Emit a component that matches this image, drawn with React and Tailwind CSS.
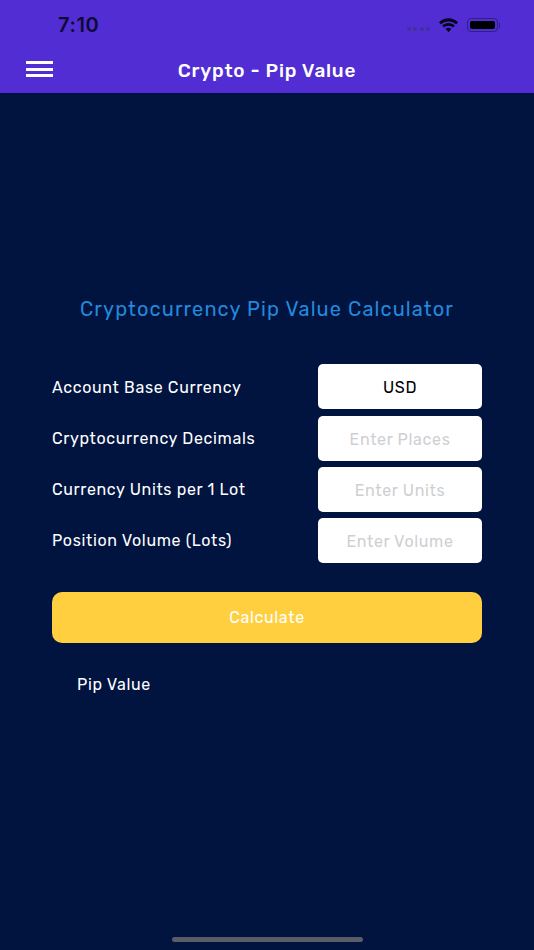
import { useState } from 'react';

const fields = [
  { label: 'Account Base Currency', value: 'USD' },
  { label: 'Cryptocurrency Decimals', placeholder: 'Enter Places' },
  { label: 'Currency Units per 1 Lot', placeholder: 'Enter Units' },
  { label: 'Position Volume (Lots)', placeholder: 'Enter Volume' },
];

const font = { fontFamily: 'Rubik, "Noto Sans", Inter, sans-serif' };

function StatusIcons() {
  return (
    <div className="flex items-center">
      <div className="mt-[8px] mr-[8px] flex gap-[2.5px]">
        {[0, 1, 2, 3].map((i) => (
          <span key={i} className="h-[4px] w-[4px] rounded-full bg-[#43309c]" />
        ))}
      </div>
      <svg width="21" height="15" viewBox="0 0 21 15" className="mr-[8px]">
        <path fill="#05051f" d="M10.5 3.400c3 0 5.600 1.100 7.600 3l1.900-2.100C17.400 1.700 14 .3 10.500.3S3.600 1.700 1 4.300l1.900 2.100c2-1.900 4.600-3 7.600-3z" />
        <path fill="#05051f" d="M10.500 7.800c1.800 0 3.400.7 4.600 1.800l1.700-2c-1.600-1.500-3.900-2.500-6.300-2.500s-4.700 1-6.300 2.500l1.700 2c1.200-1.100 2.800-1.800 4.600-1.800z" />
        <path fill="#05051f" d="M10.500 9.700c-1.100 0-2.100.4-2.900 1.100l2.900 3.400 2.900-3.400c-.8-.7-1.800-1.100-2.900-1.100z" />
      </svg>
      <div className="flex items-center">
        <div className="flex h-[14px] w-[31px] items-center rounded-[4px] border border-[#2f2085] p-[2px]">
          <div className="h-full w-full rounded-[2px] bg-black" />
        </div>
        <span className="ml-[1px] h-[5px] w-[1px] bg-[#2f2085]" />
      </div>
    </div>
  );
}

export default function App() {
  const [vals, setVals] = useState({});

  return (
    <div className="flex h-[950px] w-[534px] flex-col bg-[#00143f] text-white" style={font}>
      <header className="h-[93px] bg-[#512dd3]">
        <div className="flex h-[50px] items-center justify-between pl-[58px] pr-[34px]">
          <span className="text-[20px] font-semibold tracking-[0.6px] text-[#0d0a33]" style={{ fontFamily: 'Inter, sans-serif' }}>7:10</span>
          <StatusIcons />
        </div>
        <div className="relative flex h-[43px] items-center justify-center">
          <div className="absolute left-[26px] top-[11px] flex flex-col gap-[3.5px]">
            <span className="h-[3px] w-[27px] bg-white" />
            <span className="h-[3px] w-[27px] bg-white" />
            <span className="h-[3px] w-[27px] bg-white" />
          </div>
          <h1 className="text-[19px] font-medium tracking-[0.8px]">Crypto - Pip Value</h1>
        </div>
      </header>

      <main className="flex flex-1 flex-col px-[52px] pt-[203px]">
        <h2 className="text-center text-[20px] leading-[26px] tracking-[1.1px] text-[#2389dc]">
          Cryptocurrency Pip Value Calculator
        </h2>

        <div className="mt-[42.4px] flex flex-col gap-[6.2px]">
          {fields.map((f) => (
            <div key={f.label} className="flex items-center justify-between">
              <span className="pt-[2px] text-[16px] tracking-[0.65px]">{f.label}</span>
              {f.value ? (
                <div className="flex h-[45px] w-[164px] items-center justify-center rounded-[5px] bg-white pt-[2px] text-[16px] tracking-[0.65px] text-black">
                  {f.value}
                </div>
              ) : (
                <input
                  className="h-[45px] w-[164px] rounded-[5px] bg-white pt-[2px] text-center text-[16px] tracking-[0.65px] text-black outline-none placeholder:text-[#cfcfd2]"
                  placeholder={f.placeholder}
                  value={vals[f.label] || ''}
                  onChange={(e) => setVals({ ...vals, [f.label]: e.target.value })}
                />
              )}
            </div>
          ))}
        </div>

        <button className="mt-[29px] h-[51px] w-full rounded-[10px] bg-[#ffcf40] pt-[2px] text-[16px] tracking-[0.65px] text-white">
          Calculate
        </button>

        <p className="mt-[32px] pl-[25px] text-[16px] leading-[20px] tracking-[0.65px]">Pip Value</p>
      </main>

      <div className="flex justify-center pb-[8px]">
        <span className="h-[5px] w-[191px] rounded-full bg-[#5a5c66]" />
      </div>
    </div>
  );
}
